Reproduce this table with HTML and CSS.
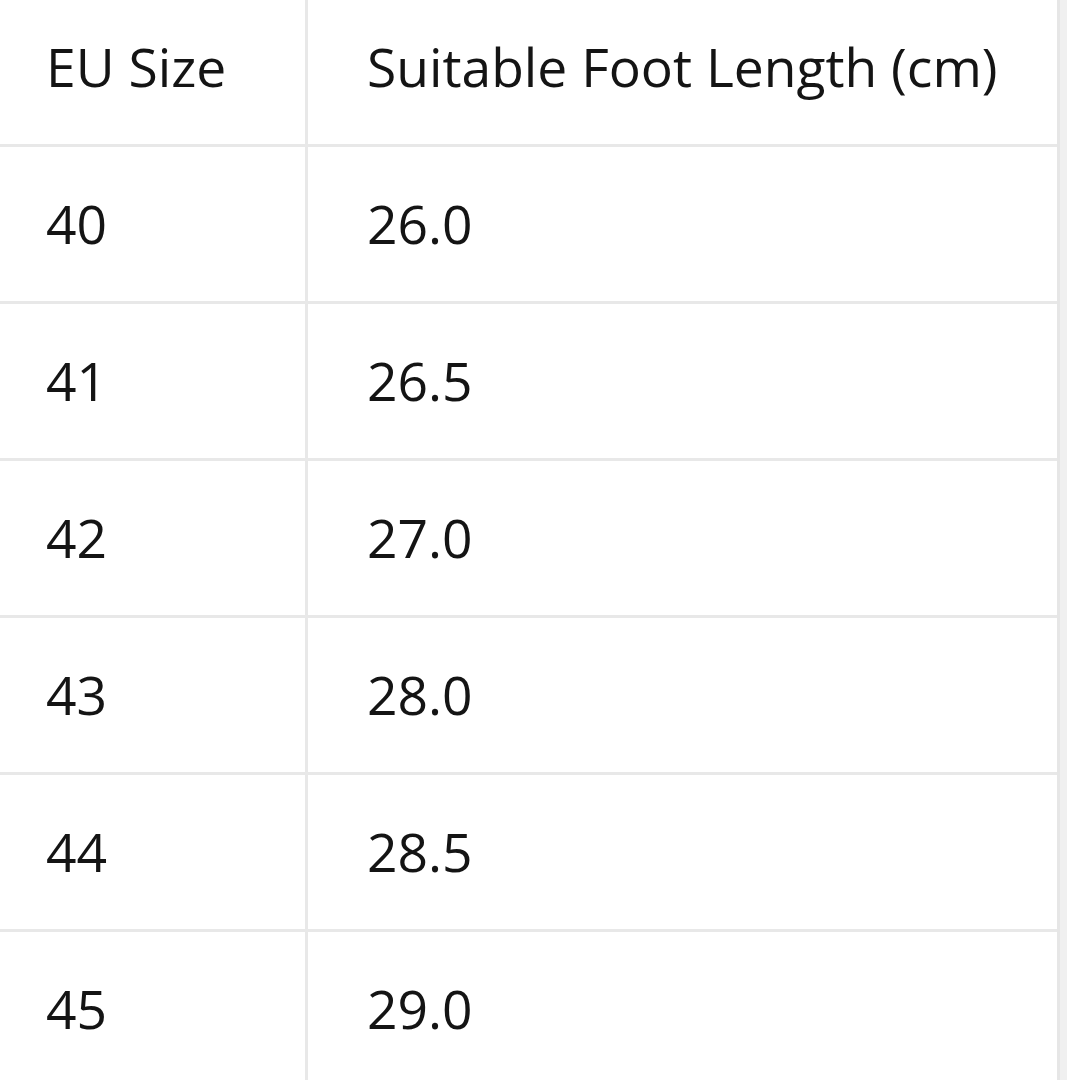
FILE: index.html
```html
<!DOCTYPE html>
<html lang="en">
<head>
<meta charset="utf-8">
<title>Size Chart</title>
<link rel="stylesheet" href="styles.css">
</head>
<body>
<div class="frame">
  <div class="size-table">
    <div class="row head">
      <div class="cell c1">EU Size</div>
      <div class="cell c2">Suitable Foot Length (cm)</div>
    </div>
    <div class="row">
      <div class="cell c1">40</div>
      <div class="cell c2">26.0</div>
    </div>
    <div class="row">
      <div class="cell c1">41</div>
      <div class="cell c2">26.5</div>
    </div>
    <div class="row">
      <div class="cell c1">42</div>
      <div class="cell c2">27.0</div>
    </div>
    <div class="row">
      <div class="cell c1">43</div>
      <div class="cell c2">28.0</div>
    </div>
    <div class="row">
      <div class="cell c1">44</div>
      <div class="cell c2">28.5</div>
    </div>
    <div class="row">
      <div class="cell c1">45</div>
      <div class="cell c2">29.0</div>
    </div>
  </div>
  <div class="edge"></div>
</div>
</body>
</html>
```
FILE: styles.css
```css
html, body {
  margin: 0;
  padding: 0;
  background: #ffffff;
  overflow: hidden;
}
body {
  font-family: "Open Sans", "Noto Sans", sans-serif;
  color: #141414;
}
.frame {
  display: flex;
  height: 1080px;
  overflow: hidden;
}
.size-table {
  width: 1057px;
  margin-top: -10px;
  border-right: 3px solid #e6e6e6;
  flex: none;
}
.edge {
  flex: 1;
  background: #f0f0f0;
}
.row {
  display: grid;
  grid-template-columns: 308px 1fr;
  height: 157px;
  box-sizing: border-box;
  border-bottom: 3px solid #e8e8e8;
}
.cell {
  display: flex;
  align-items: center;
  font-size: 53.4px;
  line-height: 1;
  white-space: nowrap;
}
.c1 {
  padding-left: 46px;
  border-right: 3px solid #e8e8e8;
}
.c2 {
  padding-left: 59px;
}
```
